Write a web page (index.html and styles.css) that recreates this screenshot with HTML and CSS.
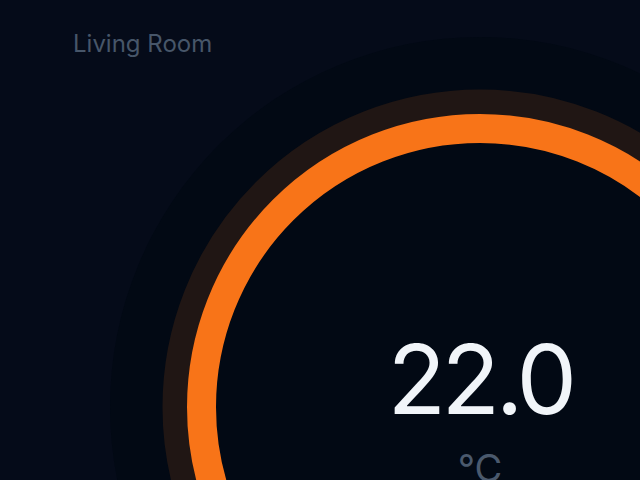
FILE: index.html
```html
<!DOCTYPE html>
<html lang="en">
<head>
<meta charset="utf-8">
<title>Thermostat</title>
<link rel="stylesheet" href="styles.css">
</head>
<body>
<main class="app">
  <header class="room">Living Room</header>
  <section class="dial">
    <svg class="rings" viewBox="0 0 740 740" width="740" height="740" aria-hidden="true">
      <circle class="track" cx="370" cy="370" r="305"></circle>
      <circle class="progress" cx="370" cy="370" r="278.5"></circle>
    </svg>
    <div class="readout">
      <div class="temp">22.0</div>
      <div class="unit">°C</div>
    </div>
  </section>
</main>
</body>
</html>
```

FILE: styles.css
```css
html, body {
  margin: 0;
  padding: 0;
  height: 100%;
  overflow: hidden;
  background: #050b19;
}

body {
  font-family: Inter, "Noto Sans", "Liberation Sans", sans-serif;
}

.app {
  display: grid;
  grid-template-columns: 1fr;
  grid-template-rows: auto;
  width: 640px;
  height: 480px;
  overflow: hidden;
}

.room {
  grid-area: 1 / 1;
  align-self: start;
  justify-self: start;
  margin: 28px 0 0 73px;
  font-size: 24px;
  line-height: 32px;
  color: #475669;
  z-index: 1;
}

.dial {
  grid-area: 1 / 1;
  align-self: start;
  justify-self: start;
  margin: 37px 0 0 110px;
  width: 740px;
  height: 740px;
  border-radius: 50%;
  background: #020914;
  display: grid;
  place-items: center;
}

.rings {
  grid-area: 1 / 1;
  display: block;
}

.track {
  fill: none;
  stroke: #201614;
  stroke-width: 25;
}

.progress {
  fill: none;
  stroke: #f87418;
  stroke-width: 29;
}

.readout {
  grid-area: 1 / 1;
  display: flex;
  flex-direction: column;
  align-items: center;
  margin-top: 4px;
}

.temp {
  font-size: 96px;
  font-weight: 400;
  line-height: 1;
  color: #f1f5f9;
  letter-spacing: -4.5px;
}

.unit {
  font-size: 38px;
  line-height: 1;
  color: #4a596d;
  margin-top: 22px;
}
```
